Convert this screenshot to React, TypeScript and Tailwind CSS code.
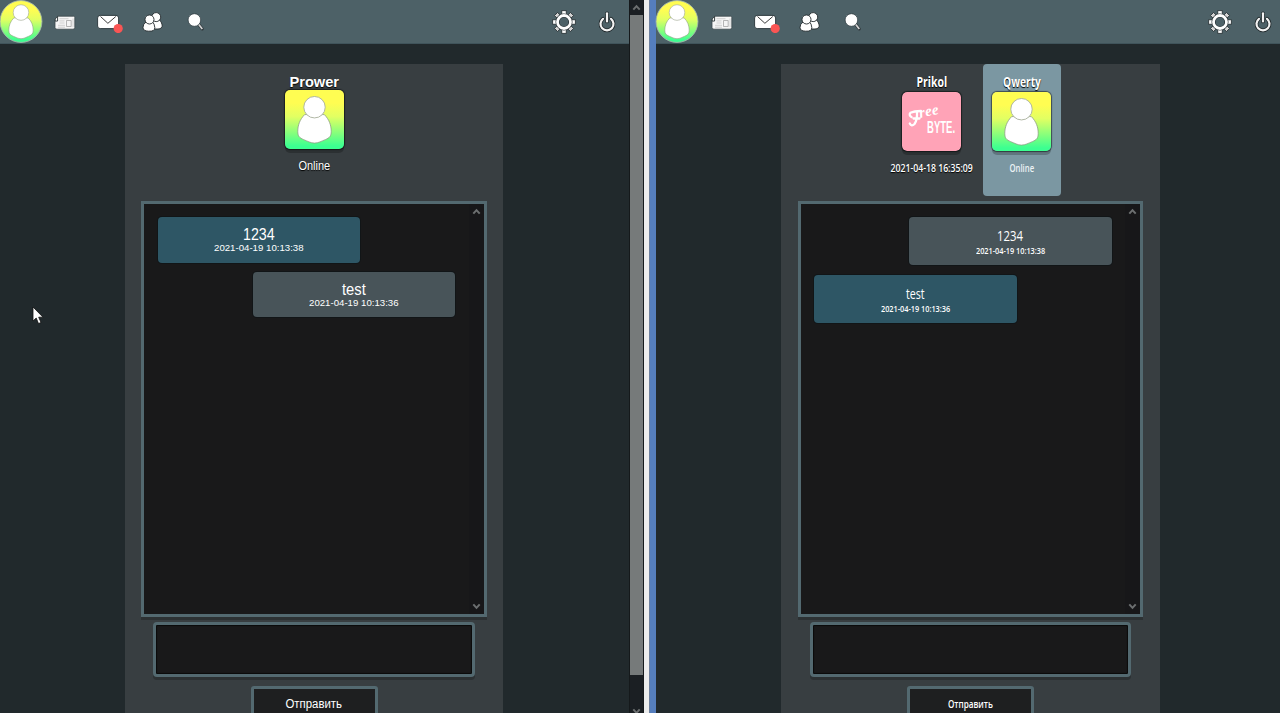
import React from "react";

type Side = "left" | "right";

interface Message {
  text: string;
  time: string;
  own: boolean;
}

interface Face {
  narrow: boolean;
}

function Txt({ children, width, className = "" }: { children: string; width: number; className?: string }) {
  const ref = React.useRef<HTMLSpanElement>(null);
  const [scale, setScale] = React.useState(1);
  React.useLayoutEffect(() => {
    if (ref.current) setScale(width / ref.current.offsetWidth);
  }, [width]);
  return (
    <span className="flex justify-center whitespace-nowrap">
      <span ref={ref} className={"inline-block shrink-0 " + className} style={{ transform: `scaleX(${scale})` }}>
        {children}
      </span>
    </span>
  );
}

function Person({ id, round = false }: { id: string; round?: boolean }) {
  return (
    <svg viewBox="0 0 60 60" className="block h-full w-full">
      <defs>
        <linearGradient id={id} x1="0" y1="0" x2="0" y2="1">
          <stop offset="0.22" stopColor="#fffd52" />
          <stop offset="0.45" stopColor="#e2ff62" />
          <stop offset="0.95" stopColor="#3cff91" />
        </linearGradient>
      </defs>
      {round ? (
        <circle cx="30" cy="30" r="29.2" fill={`url(#${id})`} stroke="#a9bcae" strokeWidth="1.2" />
      ) : (
        <rect width="60" height="60" fill={`url(#${id})`} />
      )}
      <path
        d="M20 25C15 30 13 36 13 42C13 47 14.5 48.5 19 50.5C23 52 26 54 30 54C34 54 37 52 41 50.5C45.5 48.5 47 47 47 42C47 36 45 30 40 25Z"
        fill="#fff"
        stroke="#8d9b83"
        strokeWidth="0.8"
      />
      <circle cx="30" cy="17.5" r="10.9" fill="#fff" stroke="#a5ad99" strokeWidth="0.9" />
    </svg>
  );
}

function NewsIcon() {
  return (
    <svg width="24" height="20" viewBox="0 0 24 20">
      <path d="M4.5 4.2H20.5Q21.8 4.2 21.8 5.5V15.5Q21.8 17.2 20 17.2H4Q2 17.2 2 15.5V8.7H4.5Z" fill="#f6f6f6" stroke="#3b474b" strokeWidth=".8" />
      <path d="M4.6 4.5L2.2 7V9H4.6Z" fill="#fff" stroke="#20282b" strokeWidth=".8" />
      <path d="M6.5 6.7h9M6.5 8.9h5M6.5 11h5M5 13.3h7M5 15.2h7" stroke="#c0c0c0" strokeWidth=".7" />
      <path d="M13.5 8.5h4.7v6h-4.7z" fill="#f4f4f4" stroke="#a5a5a5" strokeWidth=".8" />
      <path d="M20 6.5v8.5" stroke="#ccc" strokeWidth=".8" />
    </svg>
  );
}

function MailIcon() {
  return (
    <svg width="30" height="22" viewBox="0 0 30 22">
      <rect x="1.6" y="4.4" width="21" height="13.2" rx="2.6" fill="#fff" stroke="#263237" strokeWidth=".9" />
      <path d="M4.5 5.5L11.9 12.3L19.8 5.5" fill="none" stroke="#3c3c3c" strokeWidth="1" />
      <circle cx="22.2" cy="17.5" r="4.6" fill="#fa5554" />
    </svg>
  );
}

function PeopleIcon() {
  return (
    <svg width="24" height="24" viewBox="0 0 24 24" fill="#fff" stroke="#20282b" strokeWidth=".9">
      <path d="M12 10.5Q9.5 18 13 19H17Q21.5 18.8 21.2 15Q20.5 11 18 9.8Z" />
      <circle cx="15.2" cy="7.1" r="4.5" />
      <path d="M5 12Q2 14 2 17.5Q2 21 7.5 21.2Q14 21.6 13.8 17.5Q13.5 13.5 11.5 12Z" />
      <circle cx="8.5" cy="9.5" r="4.5" />
    </svg>
  );
}

function SearchIcon() {
  return (
    <svg width="22" height="22" viewBox="0 0 22 22">
      <path d="M12 12.5L16.3 18" stroke="#30393d" strokeWidth="3" strokeLinecap="round" />
      <path d="M12 12.5L16.3 18" stroke="#d6d6d6" strokeWidth="1.7" />
      <circle cx="8.4" cy="9" r="6.3" fill="#fff" stroke="#27343a" strokeWidth=".7" />
    </svg>
  );
}

function GearIcon() {
  const angles = [45, 135, 225, 315, 0, 90, 180, 270];
  return (
    <svg width="26" height="26" viewBox="0 0 26 26">
      {angles.map((a) => (
        <rect key={a} x="10.8" y="1.7" width="4.4" height="4" fill={a % 90 ? "#d4d4d4" : "#fff"} stroke="#222b2e" strokeWidth=".8" transform={`rotate(${a} 13 13)`} />
      ))}
      <circle cx="13" cy="13" r="6.5" fill="none" stroke="#20282b" strokeWidth="4" />
      <circle cx="13" cy="13" r="6.5" fill="none" stroke="#fff" strokeWidth="2.8" />
    </svg>
  );
}

function PowerIcon() {
  return (
    <svg width="22" height="26" viewBox="0 0 22 26" fill="none" strokeLinecap="round">
      <g stroke="#20282b" strokeWidth="3.7">
        <path d="M7 9.8A6.5 6.5 0 1 0 15 9.8" />
        <path d="M11 4.3V12.5" />
      </g>
      <g stroke="#f3f3f3" strokeWidth="2.2">
        <path d="M7 9.8A6.5 6.5 0 1 0 15 9.8" />
        <path d="M11 4.3V12.5" />
      </g>
    </svg>
  );
}

function Chevron({ down = false, className = "" }: { down?: boolean; className?: string }) {
  return (
    <svg width="9" height="7" viewBox="0 0 9 7" className={className}>
      <path d={down ? "M1.3 1.3L4.5 4.8L7.7 1.3" : "M1.3 5.7L4.5 2.2L7.7 5.7"} fill="none" stroke="#6c6f70" strokeWidth="2" />
    </svg>
  );
}

function FreeByte() {
  return (
    <div className="flex h-full w-full flex-col rounded-[5px] bg-[#ffa3b7] pt-[15px] text-white">
      <div className="flex h-[11px] items-start pl-[7px]">
        <svg width="13" height="18" viewBox="0 0 13 18" className="shrink-0 overflow-visible" fill="none" stroke="#fff" strokeLinecap="round" strokeLinejoin="round">
          <path d="M2.5 10Q-.5 8 1.500 5.800Q5 4.200 12 4M8 4.500Q8.500 13 5.500 17Q2.500 20 .8 16.500M4.500 11.500H10.500" strokeWidth="2.300" />
        </svg>
        <span className="-mt-[3px] -ml-[3px] block origin-left rotate-[-12deg] font-['Liberation_Serif',serif] text-[15px] leading-[18px] font-bold tracking-[0.3px] italic">ree</span>
      </div>
      <div className="flex justify-center pl-[20px]">
        <div className="w-[30px]">
          <div className="text-[17px] leading-[20px] font-bold font-['Liberation_Sans',sans-serif]">
            <Txt width={28}>BYTE.</Txt>
          </div>
        </div>
      </div>
    </div>
  );
}

function Header({ side }: { side: Side }) {
  return (
    <header className="flex h-11 shrink-0 items-start border-b border-[#40545b] bg-[#4d6167]">
      <div className="-ml-px h-[43px] w-11 shrink-0">
        <Person id={`top-${side}`} round />
      </div>
      <nav className={"flex grow items-center pt-[9px] " + (side === "right" ? "pl-[0.5px]" : "")}>
        <div className="ml-[10px] flex w-[43px]"><NewsIcon /></div>
        <div className="flex w-[45px]"><MailIcon /></div>
        <div className="flex w-[45px] pt-px"><PeopleIcon /></div>
        <div className="flex"><SearchIcon /></div>
      </nav>
      <div className="flex pt-[9px] pr-[11px]">
        <div className="flex w-[45px]"><GearIcon /></div>
        <PowerIcon />
      </div>
    </header>
  );
}

const shadowText = "[text-shadow:0_1px_1px_#000]";

function Contact({
  name,
  nameWidth,
  status,
  statusWidth,
  narrow,
  active = false,
  children,
}: Face & {
  name: string;
  nameWidth: number;
  status: string;
  statusWidth: number;
  active?: boolean;
  children: React.ReactNode;
}) {
  return (
    <div className={"flex h-[132px] flex-col items-center rounded-[4px] text-white " + (active ? "w-[78px] bg-[#7b97a2]" : "w-[102px]")}>
      <div className={(narrow ? "mt-[9px] h-[19px] text-[13.5px] leading-[19px] " : "mt-2 h-[18px] text-[15.5px] leading-[19px] ") + "font-bold " + shadowText}>
        <Txt width={nameWidth}>{name}</Txt>
      </div>
      <div className="h-[59px] w-[59px] shrink-0 overflow-hidden rounded-[5px] shadow-[0_0_1px_1px_#00000080,0_4px_0_#00000038]">{children}</div>
      <div className={(narrow ? "mt-[9px] text-[10.5px] leading-4 font-semibold " : "mt-[9px] text-[12px] leading-4 ") + (active ? "text-[#edf3f5]" : shadowText)}>
        <Txt width={statusWidth}>{status}</Txt>
      </div>
    </div>
  );
}

function Bubble({ message, narrow }: Face & { message: Message }) {
  return (
    <div
      className={
        "flex w-[202.5px] flex-col rounded-[4px] text-center text-white shadow-[0_0_0_1px_#111517] " +
        (message.own ? "ml-[95px] bg-[#485459] " : "bg-[#2e5665] ") +
        (narrow ? "h-12 pt-[9px]" : "h-[45.5px] pt-[9px]")
      }
    >
      <div className={narrow ? "text-[14px] leading-[20px] font-medium" : "text-[16px] leading-[17px]"}>
        <Txt width={narrow ? (message.text === "1234" ? 26 : 19) : message.text === "1234" ? 32 : 24}>{message.text}</Txt>
      </div>
      <div className={narrow ? "text-[9px] leading-[10px] font-semibold" : "text-[9px] leading-[11px]"}>
        <Txt width={narrow ? 69 : 90}>{message.time}</Txt>
      </div>
    </div>
  );
}

function Chat({ side, messages, children }: { side: Side; messages: Message[]; children: React.ReactNode }) {
  const narrow = side === "right";
  return (
    <section
      className={
        "flex h-full w-[629px] shrink-0 flex-col bg-[#21292c] " +
        (narrow ? "font-['Open_Sans','Noto_Sans',sans-serif]" : "font-['Liberation_Sans',Arial,sans-serif]")
      }
    >
      <Header side={side} />
      <main className={"mt-5 ml-[125px] flex grow flex-col items-center bg-[#383e41] " + (narrow ? "w-[379px]" : "w-[378px]")}>
        <div className="flex h-[137px] shrink-0">{children}</div>
        <div className={"flex h-[416px] shrink-0 border-[3px] border-[#536970] bg-[#19191a] shadow-[0_3px_0_#2c3133] " + (narrow ? "w-[345px]" : "w-[346px]")}>
          <div className={"flex shrink-0 flex-col pt-[13px] " + (narrow ? "w-[324px] gap-[9.5px] pl-[13px]" : "w-[325px] gap-[9px] pl-[13.5px]")}>
            {messages.map((m) => (
              <Bubble key={m.time} message={m} narrow={narrow} />
            ))}
          </div>
          <div className="flex w-[15px] flex-col items-center justify-between bg-[#171719] py-[4px]">
            <Chevron />
            <Chevron down />
          </div>
        </div>
        <textarea className={"mt-[5px] block h-[55px] shrink-0 resize-none rounded-[4px] border-[3px] border-[#536970] bg-[#19191a] text-white shadow-[0_3px_0_#2c3133,inset_0_0_1px_1px_#0a0a0a] outline-none " + (narrow ? "w-[321px]" : "w-[322px]")} />
        <button className={"mt-[9px] block h-[38px] w-[127px] shrink-0 rounded-[3px] border-[3px] border-[#536970] bg-[#1e1f20] text-white " + (narrow ? "pb-0.5 text-[11px] font-semibold" : "pb-0.5 text-[12px]")}>
          <Txt width={narrow ? 45 : 57}>Отправить</Txt>
        </button>
      </main>
    </section>
  );
}

export default function App() {
  return (
    <div className="relative flex h-[713px] w-[1280px] overflow-hidden bg-[#21292c]">
      <Chat
        side="left"
        messages={[
          { text: "1234", time: "2021-04-19 10:13:38", own: false },
          { text: "test", time: "2021-04-19 10:13:36", own: true },
        ]}
      >
        <Contact name="Prower" nameWidth={50} status="Online" statusWidth={32} narrow={false}>
          <Person id="prower" />
        </Contact>
      </Chat>
      <div className="flex w-[15px] shrink-0 flex-col items-center border-x border-[#15191b] bg-[#1b1f23]">
        <div className="flex h-[15px] w-full shrink-0 items-center justify-center"><Chevron /></div>
        <div className="h-[660px] w-full shrink-0 bg-[#767a7a]" />
        <div className="mt-[33px]"><Chevron down /></div>
      </div>
      <div className="w-[5px] shrink-0 bg-[#ececec]" />
      <div className="w-px shrink-0 bg-[#6c7f9f]" />
      <div className="w-[6px] shrink-0 bg-[#557ebd]" />
      <Chat
        side="right"
        messages={[
          { text: "1234", time: "2021-04-19 10:13:38", own: true },
          { text: "test", time: "2021-04-19 10:13:36", own: false },
        ]}
      >
        <Contact name="Prikol" nameWidth={31} status="2021-04-18 16:35:09" statusWidth={82} narrow>
          <FreeByte />
        </Contact>
        <Contact name="Qwerty" nameWidth={38} status="Online" statusWidth={25} narrow active>
          <Person id="qwerty" />
        </Contact>
      </Chat>
      <svg width="12" height="19" viewBox="0 0 12 19" className="absolute top-[306px] left-[32px]">
        <path d="M1 1V15L4.2 12L6.5 17.6L9 16.5L6.7 11.2H11Z" fill="#fff" stroke="#111" strokeWidth=".8" />
      </svg>
    </div>
  );
}
